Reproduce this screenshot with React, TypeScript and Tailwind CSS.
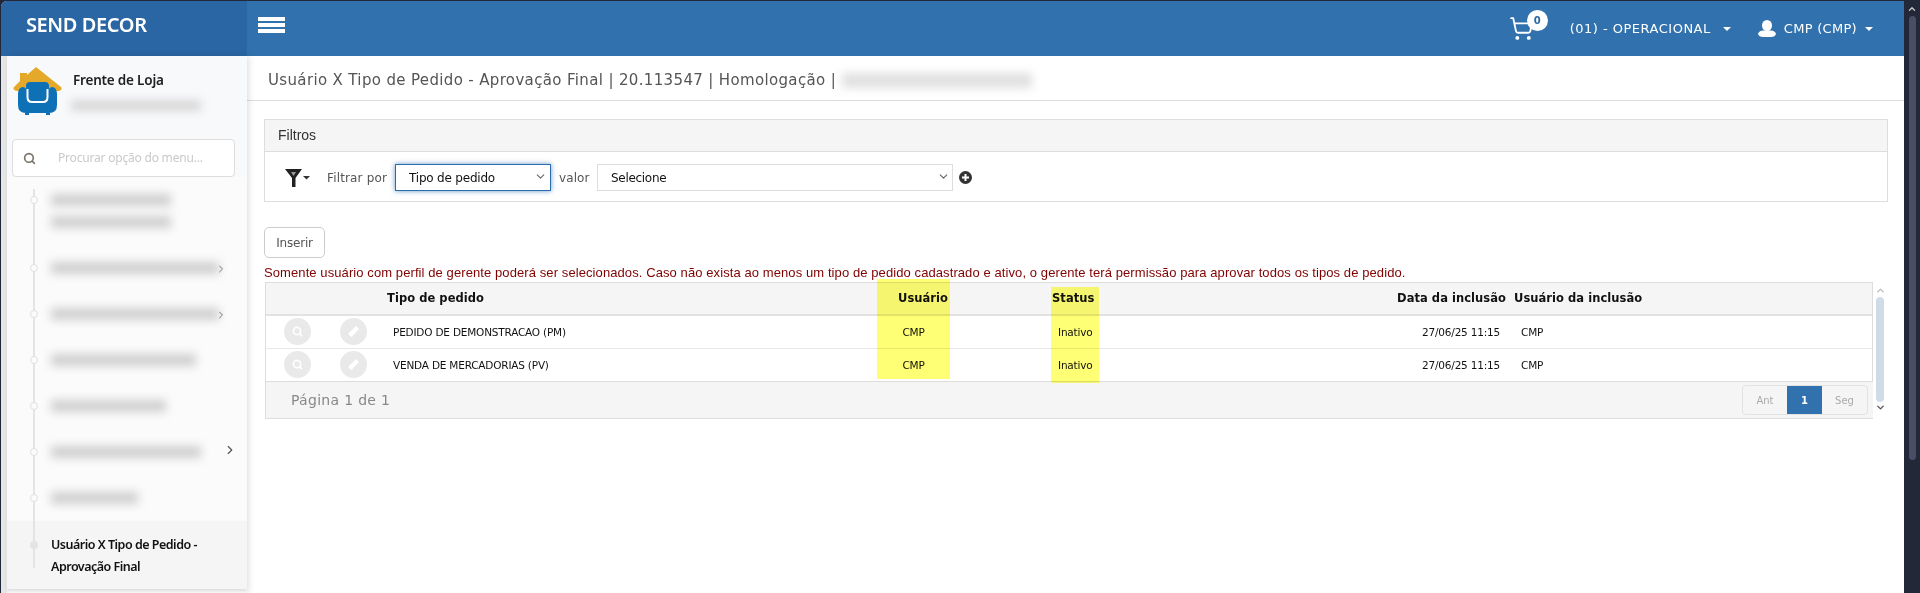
import React from 'react';
import { ChevronDown, ChevronRight, ChevronUp, Search, ShoppingCart } from 'lucide-react';

const menuItems = [
  { bars: [120, 120], arrow: false },
  { bars: [168], arrow: true },
  { bars: [168], arrow: true },
  { bars: [145], arrow: false },
  { bars: [115], arrow: false },
  { bars: [150], arrow: 'full' },
  { bars: [87], arrow: false },
];

const rows = [
  { tipo: 'PEDIDO DE DEMONSTRACAO (PM)', usuario: 'CMP', status: 'Inativo', data: '27/06/25 11:15', inclusao: 'CMP' },
  { tipo: 'VENDA DE MERCADORIAS (PV)', usuario: 'CMP', status: 'Inativo', data: '27/06/25 11:15', inclusao: 'CMP' },
];

const Logo = () => (
  <svg width="49" height="49" viewBox="0 0 49 49" className="shrink-0">
    <path d="M23 0 L48 20 Q50 23 46 24 L4 24 Q-1 23 1 20 L7 14 L7 6 L14 6 L14 8 Z" fill="#e5a92a" />
    <rect x="13" y="15" width="23" height="20" rx="4" fill="#0f71b5" />
    <path d="M5 28 Q5 20 10 20 Q14 20 14 28 L14 32 L35 32 L35 28 Q35 20 39 20 Q44 20 44 28 L44 38 Q44 46 36 46 L13 46 Q5 46 5 38 Z" fill="#0f71b5" />
    <path d="M14.5 22 L14.5 30 Q14.5 35 19 35 L30 35 Q34.5 35 34.5 30 L34.5 22" fill="none" stroke="#fff" strokeWidth="2" />
    <rect x="12" y="46" width="4" height="2" fill="#0f71b5" />
    <rect x="33" y="46" width="4" height="2" fill="#0f71b5" />
  </svg>
);

const Caret = () => (
  <span className="inline-block w-0 h-0 border-x-[4px] border-x-transparent border-t-[4px] border-t-white" />
);

const Sidebar = () => (
  <aside className="relative z-10 w-[240px] h-full bg-[#f8f9fb] shadow-[2px_0_6px_rgba(0,0,0,0.12)] overflow-hidden">
    <div className="flex gap-[11px] pl-[6px] pt-[11px] h-[83px]">
      <Logo />
      <div className="pt-[2px]">
        <div className="font-['Noto_Sans'] font-semibold text-[13.5px] leading-[22px] tracking-[-0.2px] text-[#222]">Frente de Loja</div>
        <div className="mt-[9px] -ml-[2px] w-[130px] h-[11px] bg-[#d8d8d8] blur-[4px]" />
      </div>
    </div>
    <div className="ml-[5px] w-[223px] h-[38px] bg-white border border-[#ddd] rounded flex items-center pl-[10px]">
      <Search className="w-[13px] h-[13px] text-[#7a7268]" strokeWidth={3} />
      <span className="ml-[22px] font-['Noto_Sans'] text-[12px] tracking-[-0.2px] text-[#c9c9c9]">Procurar opção do menu...</span>
    </div>
    <div className="relative bg-[#fbfbfb]">
      <div className="absolute left-[26px] top-[12px] h-[379px] w-[2px] bg-[#e4e4e4]" />
      {menuItems.map((item, i) => (
        <div key={i} className="relative pl-[44px] py-3 flex flex-col">
          {item.bars.map((w, j) => (
            <div key={j} className="h-[22px] flex items-center">
              <div className="h-[12px] bg-[#cfcfcf] blur-[5px]" style={{ width: w }} />
            </div>
          ))}
          <span className="absolute left-[23px] top-[19px] w-2 h-2 rounded-full bg-[#fbfbfb] border border-[#e0e0e0]" />
          {item.arrow === 'full' && (
            <ChevronRight className="absolute right-[10px] top-[14px] w-[14px] h-[14px] text-[#555]" />
          )}
          {item.arrow === true && (
            <span className="absolute left-[212px] top-[18px] w-[4px] h-[12px] overflow-hidden">
              <ChevronRight className="-ml-[4px] w-[12px] h-[12px] text-[#777]" />
            </span>
          )}
        </div>
      ))}
      <div className="relative pl-[44px] pt-[13px] pb-[11px] bg-[#f5f5f5] shadow-[0_2px_3px_rgba(0,0,0,0.12)] font-['Noto_Sans'] font-semibold text-[12.5px] leading-[22px] tracking-[-0.5px] text-[#111]">
        <span className="absolute left-[23px] top-[20px] w-2 h-2 rounded-full bg-[#e4e4e4]" />
        <span className="absolute left-[26px] top-0 h-[47px] w-[2px] bg-[#e4e4e4]" />
        Usuário X Tipo de Pedido -<br />
        Aprovação Final
      </div>
    </div>
  </aside>
);

const FilterBar = () => (
  <section className="border border-[#ddd]">
    <div className="h-[32px] bg-[#f5f5f5] border-b border-[#ddd] pl-[13px] flex items-center font-['Liberation_Sans'] text-[14px] text-[#333]">
      Filtros
    </div>
    <div className="h-[49px] pt-[2px] flex items-center pl-[20px] font-['DejaVu_Sans'] text-[12px] text-[#555]">
      <svg width="26" height="20" viewBox="0 0 26 20" className="shrink-0">
        <path d="M0 1 H17 L10.5 10 V19 H7 V10 Z" fill="#222" />
        <path d="M6 4 H11 L8.5 8 Z" fill="#999" />
        <path d="M18 8 H25 L21.5 11.5 Z" fill="#333" />
      </svg>
      <span className="ml-[16px] w-[68px] tracking-[0.15px]">Filtrar por</span>
      <div className="relative w-[156px] h-[27px]">
        <select className="appearance-none w-full h-full bg-white border border-[#2a6cb0] shadow-[0_0_5px_rgba(42,108,176,0.7)] pl-[13px] font-['DejaVu_Sans'] text-[12px] text-[#111] tracking-[-0.2px] outline-none">
          <option>Tipo de pedido</option>
        </select>
        <ChevronDown className="absolute right-[4px] top-[6px] w-[13px] h-[13px] text-[#666] pointer-events-none" />
      </div>
      <span className="ml-[8px] w-[38px] tracking-[0.1px]">valor</span>
      <div className="relative w-[356px] h-[27px]">
        <select className="appearance-none w-full h-full bg-white border border-[#ddd] pl-[13px] font-['DejaVu_Sans'] text-[12px] text-[#111] tracking-[-0.3px] outline-none">
          <option>Selecione</option>
        </select>
        <ChevronDown className="absolute right-[3px] top-[6px] w-[13px] h-[13px] text-[#666] pointer-events-none" />
      </div>
      <span className="ml-[6px] w-[13px] h-[13px] rounded-full bg-[#333] flex items-center justify-center">
        <svg width="7" height="7" viewBox="0 0 7 7"><path d="M2.5 0 H4.5 V2.5 H7 V4.5 H4.5 V7 H2.5 V4.5 H0 V2.5 H2.5 Z" fill="#fff" /></svg>
      </span>
    </div>
  </section>
);

const RowIcons = () => (
  <>
    <td className="p-0">
      <span className="ml-[18px] w-[27px] h-[27px] rounded-full bg-[#e9e9e9] flex items-center justify-center">
        <Search className="w-[11px] h-[11px] text-white" strokeWidth={3.5} />
      </span>
    </td>
    <td className="p-0">
      <span className="ml-[15px] w-[27px] h-[27px] rounded-full bg-[#e9e9e9] flex items-center justify-center">
        <svg width="13" height="13" viewBox="0 0 13 13"><path d="M9 1 L12 4 L4.5 12 L1 9 Z" fill="#fff" /></svg>
      </span>
    </td>
  </>
);

const DataTable = () => (
  <div className="relative mt-[1px] flex">
    <div className="w-[1608px] ml-[1px] border border-[#ddd] bg-white">
      <table className="w-full table-fixed border-collapse font-['DejaVu_Sans'] text-[10.5px] text-[#111] tracking-[-0.2px]">
        <colgroup>
          <col className="w-[59px]" />
          <col className="w-[56px]" />
          <col className="w-[496px]" />
          <col className="w-[73px]" />
          <col className="w-[100px]" />
          <col className="w-[50px]" />
          <col className="w-[410px]" />
          <col />
        </colgroup>
        <thead>
          <tr className="h-[32px] bg-[#f5f5f5] border-b-2 border-[#e2e2e2] text-[11.5px] font-bold tracking-[0.05px] text-[#111]">
            <th />
            <th />
            <th className="text-left pl-[6px] font-bold">Tipo de pedido</th>
            <th className="text-right pr-[2px] font-bold">Usuário</th>
            <th />
            <th className="text-left pl-[2px] font-bold">Status</th>
            <th className="text-right pr-[4px] font-bold">Data da inclusão</th>
            <th className="text-left pl-[4px] font-bold">Usuário da inclusão</th>
          </tr>
        </thead>
        <tbody>
          {rows.map((row) => (
            <tr key={row.tipo} className="h-[33px] border-b border-[#e8e8e8] last:border-b-0">
              <RowIcons />
              <td className="pl-[12px] pt-[2px]">{row.tipo}</td>
              <td className="text-center pt-[2px]">{row.usuario}</td>
              <td />
              <td className="pl-[8px] pt-[2px]">{row.status}</td>
              <td className="text-right pr-[10px] pt-[2px]">{row.data}</td>
              <td className="pl-[11px] pt-[2px]">{row.inclusao}</td>
            </tr>
          ))}
        </tbody>
      </table>
      <div className="h-[37px] -mr-[1px] border-t border-[#ddd] bg-[#f5f5f5] flex items-center justify-between pl-[25px] pr-[5px] font-['DejaVu_Sans']">
        <span className="text-[14px] tracking-[0.3px] text-[#888]">Página 1 de 1</span>
        <div className="flex h-[30px] border border-[#e2e2e2] rounded text-[10px] text-[#aaa]">
          <span className="w-[44px] flex items-center justify-center">Ant</span>
          <span className="w-[35px] flex items-center justify-center bg-[#3172ae] text-white font-bold">1</span>
          <span className="w-[45px] flex items-center justify-center">Seg</span>
        </div>
      </div>
    </div>
    <div className="ml-[3px] w-[8px] flex flex-col items-center pt-[3px]">
      <ChevronUp className="w-[11px] h-[11px] text-[#bbb]" strokeWidth={3} />
      <div className="w-[8px] h-[105px] rounded bg-[#cfdbe6] mt-[1px]" />
      <ChevronDown className="w-[11px] h-[11px] text-[#555]" strokeWidth={3} />
    </div>
    {/* Marca-texto amarelo por cima das colunas */}
    <div className="absolute left-[613px] top-[-3px] w-[73px] h-[100px] bg-[#ffff75] mix-blend-multiply" />
    <div className="absolute left-[787px] top-[5px] w-[48px] h-[96px] bg-[#ffff75] mix-blend-multiply" />
  </div>
);

const App = () => {
  return (
    <div className="w-[1920px] h-[593px] bg-[#232838] flex overflow-hidden">
      <div className="w-[1904px] h-full pt-[1px] pl-[1px]">
        <div className="h-full bg-white flex flex-col rounded-tl-md overflow-hidden">
          <header className="h-[55px] shrink-0 bg-[#3172ae] flex items-center text-white">
            <div className="w-[246px] h-full bg-[#2a66a3] pl-[25px] pb-[7px] flex items-center font-['Noto_Sans'] font-semibold text-[20px] tracking-[-0.4px]">
              SEND DECOR
            </div>
            <div className="ml-[11px] mb-[7px] w-[27px] flex flex-col gap-[2px] blur-[0.4px]">
              <span className="h-[4px] bg-white" />
              <span className="h-[4px] bg-white" />
              <span className="h-[4px] bg-white" />
            </div>
            <div className="ml-auto flex items-center font-['DejaVu_Sans'] text-[13px]">
              <div className="relative w-[38px] h-[30px] flex items-center">
                <ShoppingCart className="w-[25px] h-[25px]" strokeWidth={1.8} />
                <span className="absolute left-[18px] top-[-4px] w-[21px] h-[21px] rounded-full bg-white text-[#2a66a3] text-[10px] font-bold flex items-center justify-center">0</span>
              </div>
              <span className="ml-[23px] tracking-[0.5px]">(01) - OPERACIONAL</span>
              <span className="ml-[12px] flex"><Caret /></span>
              <svg width="18" height="17" viewBox="0 0 18 17" className="ml-[27px]">
                <ellipse cx="9" cy="5.5" rx="5" ry="5.5" fill="#fff" />
                <path d="M0 14 Q1 10.5 5 10.5 H13 Q17 10.5 18 14 Q17 17 13 17 H5 Q1 17 0 14 Z" fill="#fff" />
              </svg>
              <span className="ml-[8px] tracking-[0.3px]">CMP (CMP)</span>
              <span className="ml-[8px] mr-[31px] flex"><Caret /></span>
            </div>
          </header>
          <div className="flex-1 flex min-h-0">
            <div className="w-[6px] bg-[#e6e6e6]" />
            <Sidebar />
            <main className="flex-1 min-w-0">
              <div className="h-[45px] border-b border-[#ddd] pl-[21px] pt-[5px] flex items-center font-['DejaVu_Sans'] text-[15px] tracking-[0.35px] text-[#555]">
                Usuário X Tipo de Pedido - Aprovação Final | 20.113547 | Homologação |
                <span className="ml-[6px] w-[190px] h-[15px] bg-[#e0e0e0] blur-[5px]" />
              </div>
              <div className="pl-[17px] pr-[16px] pt-[18px]">
                <FilterBar />
                <button className="mt-[25px] w-[61px] h-[31px] border border-[#ccc] rounded-[5px] bg-white font-['DejaVu_Sans'] text-[12px] text-[#555] tracking-[-0.2px]">
                  Inserir
                </button>
                <p className="mt-[7px] font-['Liberation_Sans'] text-[13px] leading-[16px] tracking-[0.09px] text-[#800000] whitespace-nowrap">
                  Somente usuário com perfil de gerente poderá ser selecionados. Caso não exista ao menos um tipo de pedido cadastrado e ativo, o gerente terá permissão para aprovar todos os tipos de pedido.
                </p>
                <DataTable />
              </div>
            </main>
          </div>
        </div>
      </div>
      <div className="w-4 h-full flex flex-col items-center pt-[4px]">
        <ChevronUp className="w-[10px] h-[10px] text-[#ccc]" strokeWidth={3} />
        <div className="w-[7px] h-[444px] mt-[2px] rounded bg-[#4a4d66]" />
      </div>
    </div>
  );
};

export default App;
